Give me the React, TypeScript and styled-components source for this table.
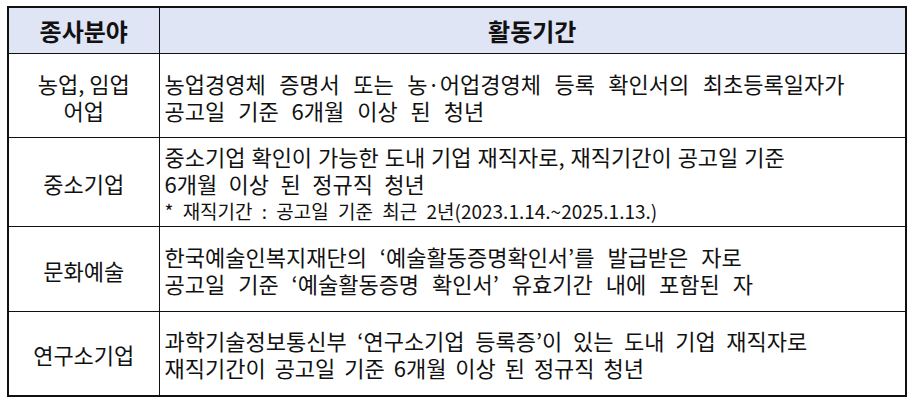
import React from 'react'
import styled, { createGlobalStyle } from 'styled-components'

const GlobalStyle = createGlobalStyle`
  html, body {
    margin : 0;
    padding : 0;
    background : #ffffff;
  }
  body {
    font-family : "Noto Sans CJK KR", "Noto Sans", sans-serif;
    color : #111111;
  }
`

// gap = extra word spacing per line, the source document spreads some lines wider
interface TextLine {
  text : string
  gap : number
}

interface Row {
  field : string[]
  lines : TextLine[]
  note? : string
  height : number
}

const rows : Row[] = [
  {
    field : ['농업, 임업', '어업'],
    lines : [
      { text : '농업경영체 증명서 또는 농·어업경영체 등록 확인서의 최초등록일자가', gap : 8.5 },
      { text : '공고일 기준 6개월 이상 된 청년', gap : 8 },
    ],
    height : 84,
  },
  {
    field : ['중소기업'],
    lines : [
      { text : '중소기업 확인이 가능한 도내 기업 재직자로, 재직기간이 공고일 기준', gap : 1 },
      { text : '6개월 이상 된 정규직 청년', gap : 6.5 },
    ],
    note : '* 재직기간 : 공고일 기준 최근 2년(2023.1.14.~2025.1.13.)',
    height : 89,
  },
  {
    field : ['문화예술'],
    lines : [
      { text : '한국예술인복지재단의 ‘예술활동증명확인서’를 발급받은 자로', gap : 8 },
      { text : '공고일 기준 ‘예술활동증명 확인서’ 유효기간 내에 포함된 자', gap : 8 },
    ],
    height : 85,
  },
  {
    field : ['연구소기업'],
    lines : [
      { text : '과학기술정보통신부 ‘연구소기업 등록증’이 있는 도내 기업 재직자로', gap : 5.7 },
      { text : '재직기간이 공고일 기준 6개월 이상 된 정규직 청년', gap : 4 },
    ],
    height : 84,
  },
]

const App = () => {
  return (
    <Page>
      <GlobalStyle />
      <Table>
        <colgroup>
          <col style={{ width : '151px' }} />
          <col />
        </colgroup>
        <thead>
          <tr>
            <HeadCell>종사분야</HeadCell>
            <HeadCell>활동기간</HeadCell>
          </tr>
        </thead>
        <tbody>
          {rows.map((row, i) => (
            <BodyRow key={i} $height={row.height}>
              <FieldCell>
                {row.field.map((f) => (
                  <Line key={f} $gap={0}>{f}</Line>
                ))}
              </FieldCell>
              <TextCell>
                {row.lines.map((l) => (
                  <Line key={l.text} $gap={l.gap}>{l.text}</Line>
                ))}
                {row.note && <Note>{row.note}</Note>}
              </TextCell>
            </BodyRow>
          ))}
        </tbody>
      </Table>
    </Page>
  )
}

const Page = styled.div`
  padding : 6px 0 0 7px;
  width : 900px;
`

const Table = styled.table`
  width : 900px;
  border-collapse : collapse;
  table-layout : fixed;
  border : 2px solid #111111;
`

const HeadCell = styled.th`
  height : 45px;
  padding : 0;
  background : #dfe5f5;
  border : 1px solid #111111;
  font-size : 24px;
  font-weight : 700;
  text-align : center;
  vertical-align : middle;
`

const BodyRow = styled.tr<{ $height : number }>`
  height : ${(props) => props.$height}px;
`

const FieldCell = styled.td`
  padding : 2px 0 0 0;
  border : 1px solid #111111;
  text-align : center;
  vertical-align : middle;
  font-size : 22px;
  line-height : 27px;
`

const TextCell = styled.td`
  padding : 2px 0 0 5px;
  border : 1px solid #111111;
  text-align : left;
  vertical-align : middle;
  font-size : 22px;
  line-height : 27px;
`

const Line = styled.div<{ $gap : number }>`
  white-space : nowrap;
  word-spacing : ${(props) => props.$gap}px;
`

const Note = styled.div`
  white-space : nowrap;
  font-size : 19px;
  line-height : 27px;
  word-spacing : 5px;
`

export default App
